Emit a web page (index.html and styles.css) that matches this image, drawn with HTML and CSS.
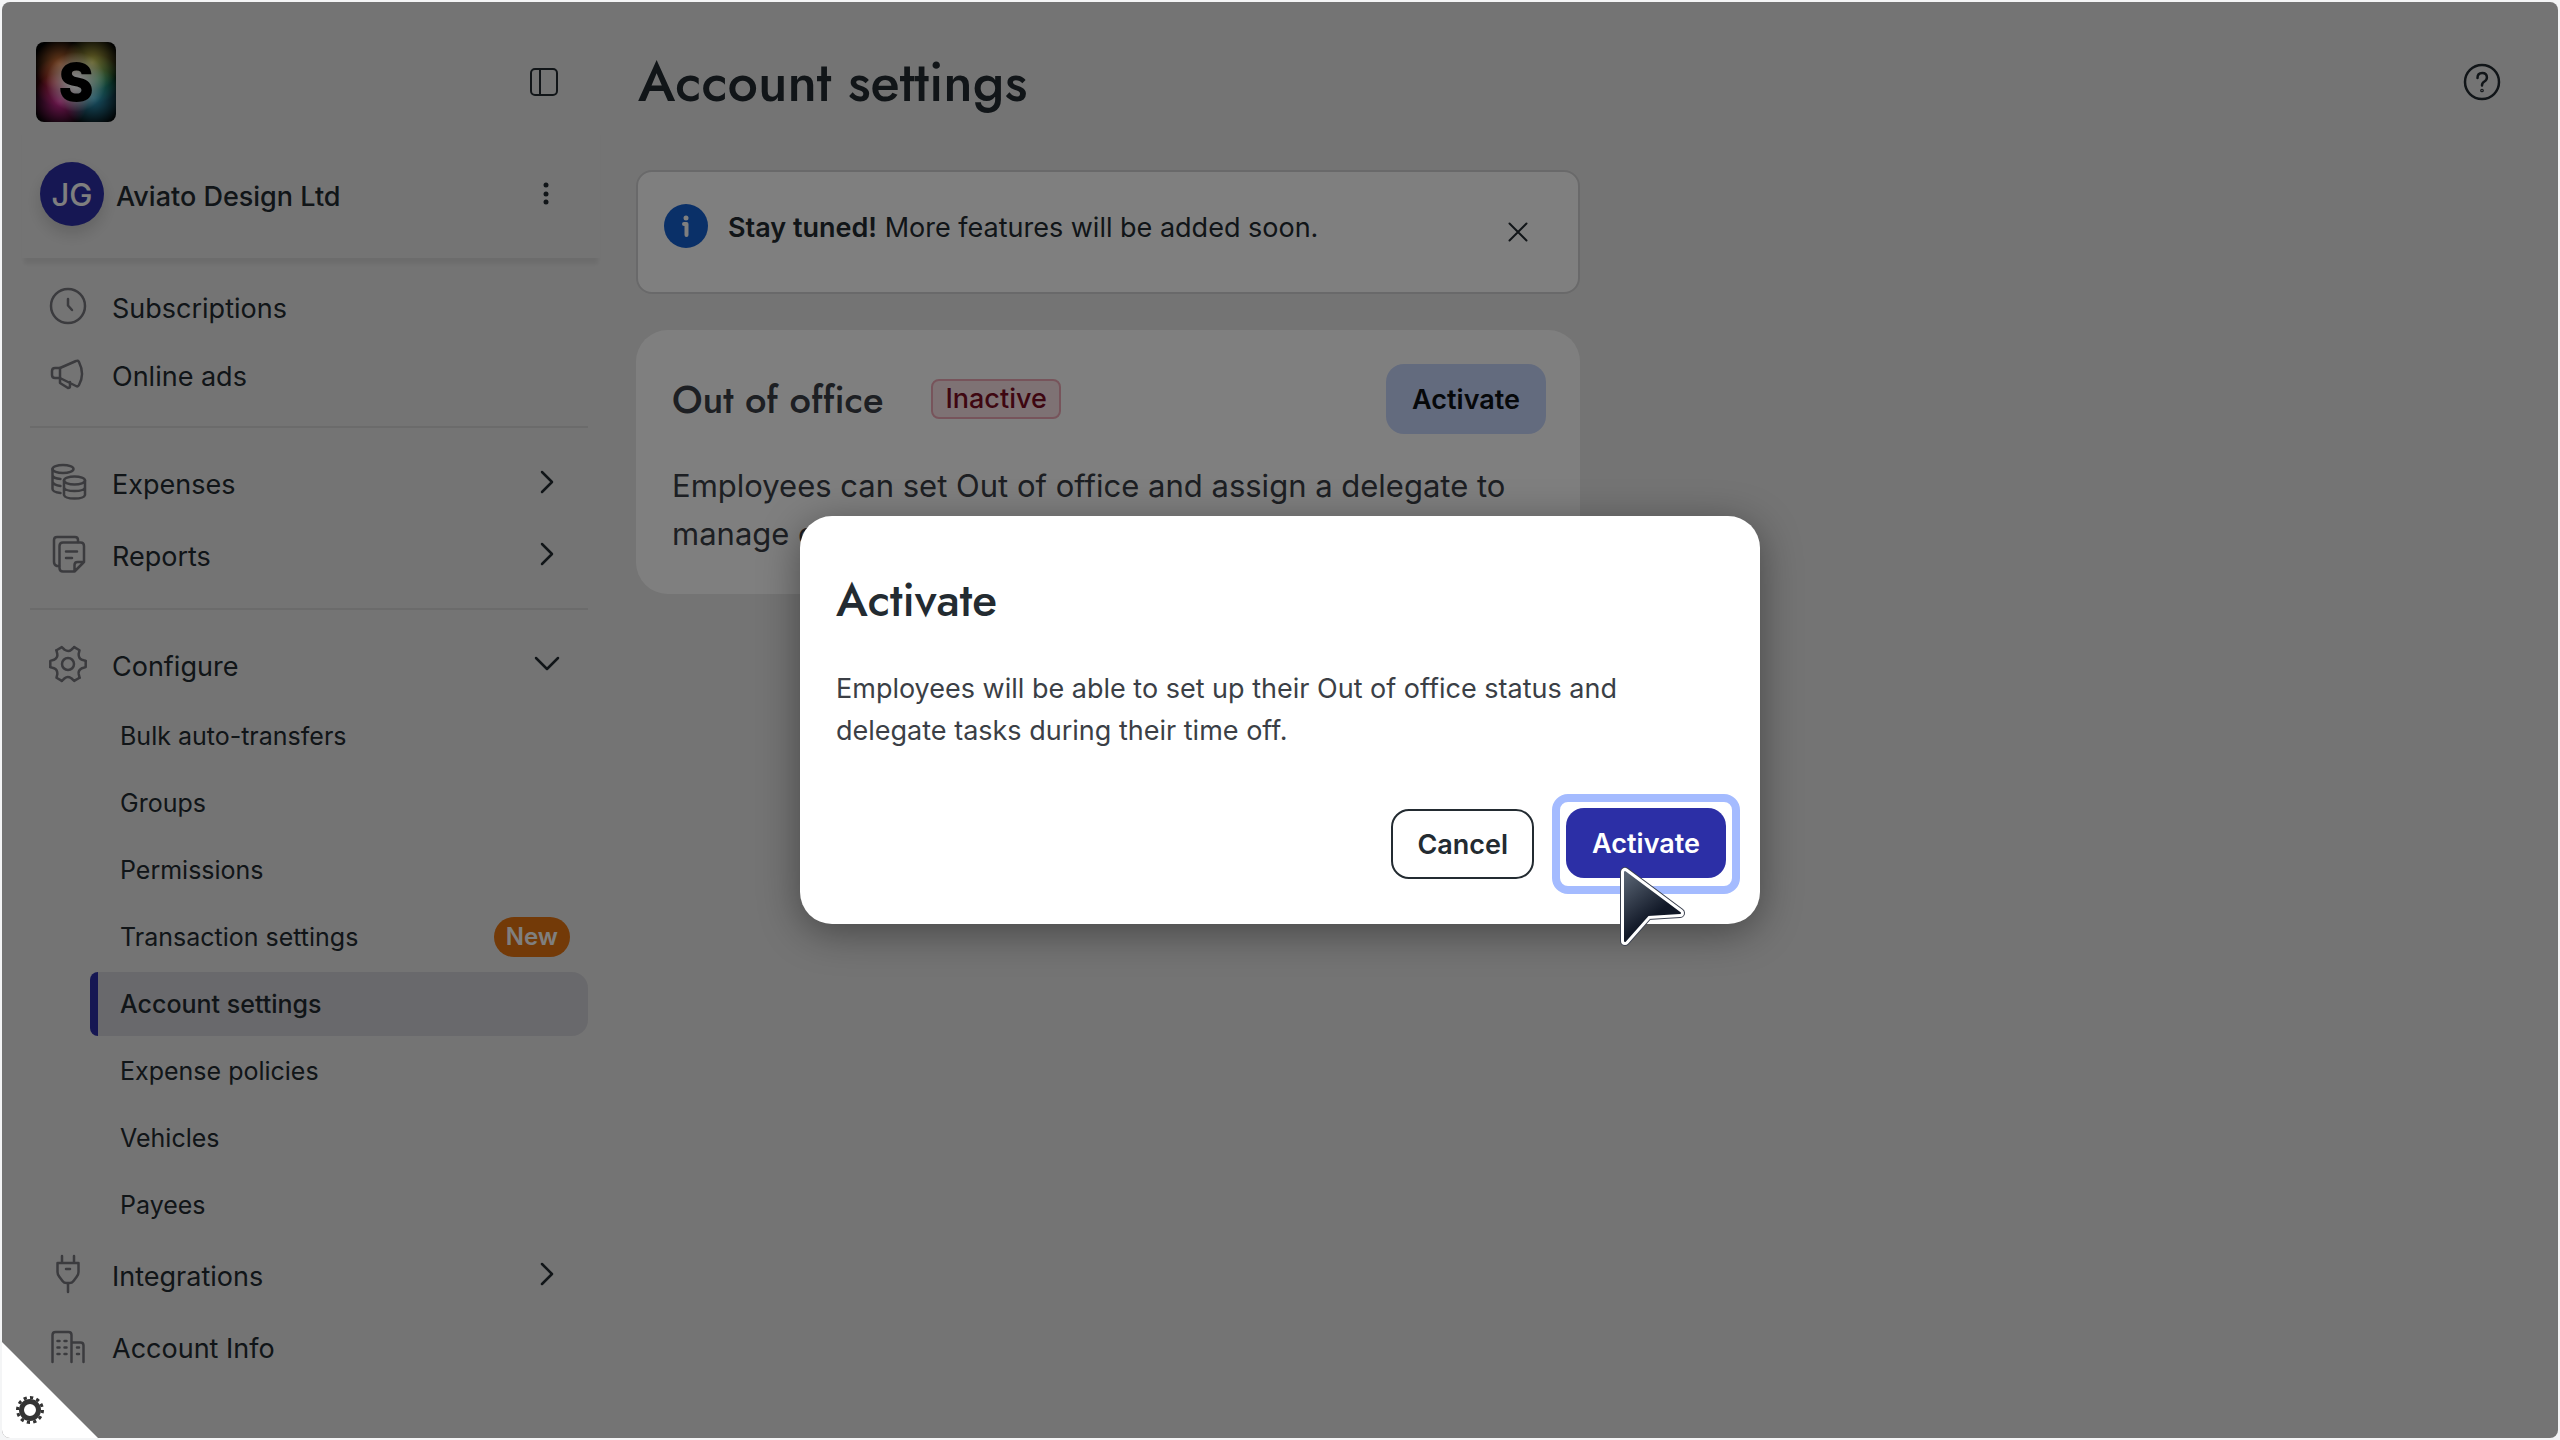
FILE: index.html
```html
<!DOCTYPE html>
<html lang="en">
<head>
    <meta charset="utf-8">
    <title>Account settings</title>
    <link rel="stylesheet" href="styles.css">
</head>
<body>
    <div class="app">
        <!-- Sidebar -->
        <aside class="sidebar">
            <div class="sidebar-top">
                <a href="#" class="logo">S</a>
                <button type="button" class="icon-btn" aria-label="Collapse sidebar">
                    <svg width="28" height="28" viewBox="0 0 28 28"><rect x="1" y="1" width="26" height="26" rx="4"/><path d="M10 1v26"/></svg>
                </button>
            </div>

            <div class="account">
                <span class="avatar">JG</span>
                <span class="account-name">Aviato Design Ltd</span>
                <button type="button" class="icon-btn dots" aria-label="Account menu">
                    <svg width="28" height="28" viewBox="0 0 28 28"><circle cx="14" cy="5" r="2.5"/><circle cx="14" cy="14" r="2.5"/><circle cx="14" cy="22" r="2.5"/></svg>
                </button>
            </div>

            <nav class="nav">
                <a href="#" class="nav-item short">
                    <svg class="nav-icon" viewBox="0 0 40 40"><circle cx="20" cy="20" r="17"/><path d="M20 13v6.500l4 4.500"/></svg>
                    <span class="nav-label">Subscriptions</span>
                </a>
                <a href="#" class="nav-item short">
                    <svg class="nav-icon" viewBox="0 0 40 40"><path d="M12 14H7q-3 0-3 3v4q0 3 3 3h5z"/><path d="M12 14L28 7q2-1 3 1q6 12 0 23q-1 2-3 1L12 24v5l8 5q2 0 2-2v-4"/></svg>
                    <span class="nav-label">Online ads</span>
                </a>
                <hr>
                <a href="#" class="nav-item">
                    <svg class="nav-icon" viewBox="0 0 40 40"><ellipse cx="15" cy="7" rx="10.500" ry="4"/><path d="M4.500 7v20q0 3 8 4M4.500 13.500q1 3 8 3.500M4.500 20q1 3 8 4"/><ellipse cx="26.500" cy="18.500" rx="10.500" ry="4"/><path d="M16 18.500V33q1 3.500 10.500 3.500T37 33V18.500M16 25.500q1 3.500 10.500 3.500T37 25.500"/></svg>
                    <span class="nav-label">Expenses</span>
                    <svg class="chevron" viewBox="0 0 28 28"><path d="M9 4l10 10L9 24"/></svg>
                </a>
                <a href="#" class="nav-item">
                    <svg class="nav-icon" viewBox="0 0 40 40"><path d="M11 32H9q-3-1-3-4V6q0-3 3-3h18q3 0 3 3v2"/><path d="M26.500 37.500H15q-3.500 0-3.500-3.500V12q0-3.500 3.500-3.500h17.500q3.500 0 3.500 3.500v16zM26.500 37.500V31q0-3 3-3H36M18 17.500h11M18 24h6"/></svg>
                    <span class="nav-label">Reports</span>
                    <svg class="chevron" viewBox="0 0 28 28"><path d="M9 4l10 10L9 24"/></svg>
                </a>
                <hr>
                <a href="#" class="nav-item">
                    <svg class="nav-icon" viewBox="0 0 40 40">
                        <g id="tooth"><path d="M37.700 16.900v6.200l-3.700 1.100q-4 2.200-3.300 5.800l.9 3.800"/></g>
                        <use href="#tooth" transform="rotate(60 20 20)"/>
                        <use href="#tooth" transform="rotate(120 20 20)"/>
                        <use href="#tooth" transform="rotate(180 20 20)"/>
                        <use href="#tooth" transform="rotate(240 20 20)"/>
                        <use href="#tooth" transform="rotate(300 20 20)"/>
                        <circle cx="20" cy="20" r="6"/>
                    </svg>
                    <span class="nav-label">Configure</span>
                    <svg class="chevron" viewBox="0 0 28 28"><path d="M3 8l11 11L25 8"/></svg>
                </a>
                <div class="subnav">
                    <a href="#">Bulk auto-transfers</a>
                    <a href="#">Groups</a>
                    <a href="#">Permissions</a>
                    <a href="#">Transaction settings <span class="new">New</span></a>
                    <a href="#" class="active">Account settings</a>
                    <a href="#">Expense policies</a>
                    <a href="#">Vehicles</a>
                    <a href="#">Payees</a>
                </div>
                <a href="#" class="nav-item">
                    <svg class="nav-icon" viewBox="0 0 40 40"><path d="M14 2v7M26 2v7M9.500 9h21v9q0 3-2 5l-3 4q-1.500 2-4 2h-3q-2.500 0-4-2l-3-4q-2-2-2-5zM20 29v9M18 15h4"/></svg>
                    <span class="nav-label">Integrations</span>
                    <svg class="chevron" viewBox="0 0 28 28"><path d="M9 4l10 10L9 24"/></svg>
                </a>
                <a href="#" class="nav-item">
                    <svg class="nav-icon" viewBox="0 0 40 40"><path d="M4.500 36V9q0-3 3-3h13q3 0 3 3v27M23.500 16.500h9q3 0 3 3V36M9.500 15h2M16.500 15h2M9.500 21.500h2M16.500 21.500h2M9.500 28h2M16.500 28h2M29 21.500h2M29 28h2"/></svg>
                    <span class="nav-label">Account Info</span>
                </a>
            </nav>
        </aside>

        <!-- Page content -->
        <main class="main">
            <header class="page-header">
                <h1>Account settings</h1>
                <button type="button" class="icon-btn help" aria-label="Help">
                    <svg width="40" height="40" viewBox="0 0 40 40"><circle cx="20" cy="20" r="17"/><path d="M15.500 16q0-5 4.700-5t4.700 4.500q0 2.500-2.500 4t-2.400 4"/><circle cx="20" cy="28.500" r=".6"/></svg>
                </button>
            </header>

            <div class="content">
                <div class="alert">
                    <svg class="info" viewBox="0 0 44 44"><circle cx="22" cy="22" r="22"/><circle class="mark-dot" cx="22" cy="14" r="2.500"/><path class="mark" d="M20 20h2.500v11"/></svg>
                    <p><strong>Stay tuned!</strong> More features will be added soon.</p>
                    <button type="button" class="icon-btn" aria-label="Dismiss">
                        <svg width="28" height="28" viewBox="0 0 28 28"><path d="M5.500 5.500l17 17M22.500 5.500l-17 17"/></svg>
                    </button>
                </div>

                <section class="card">
                    <div class="card-head">
                        <h2>Out of office</h2>
                        <span class="status">Inactive</span>
                        <button type="button" class="btn btn-light">Activate</button>
                    </div>
                    <p>Employees can set Out of office and assign a delegate to manage expenses.</p>
                </section>
            </div>
        </main>

        <!-- Confirm dialog -->
        <div class="overlay">
            <div class="modal" role="dialog" aria-modal="true" aria-labelledby="modalTitle">
                <h2 id="modalTitle">Activate</h2>
                <p>Employees will be able to set up their Out of office status and delegate tasks during their time off.</p>
                <div class="modal-actions">
                    <button type="button" class="btn btn-outline">Cancel</button>
                    <span class="focus-ring"><button type="button" class="btn btn-primary">Activate</button></span>
                </div>
                <svg class="cursor" width="72" height="88" viewBox="0 0 72 88">
                    <defs>
                        <linearGradient id="cursorFill" x1="0" y1="0" x2=".6" y2="1">
                            <stop offset="0" stop-color="#5b6675"/>
                            <stop offset=".7" stop-color="#111827"/>
                        </linearGradient>
                    </defs>
                    <path class="cursor-edge" d="M7 8v69L30 51l32-2z"/>
                    <path class="cursor-line" d="M7 8v69L30 51l32-2z"/>
                    <path class="cursor-body" d="M7 8v69L30 51l32-2z"/>
                </svg>
            </div>
        </div>

        <!-- Cookie settings corner -->
        <button type="button" class="corner" aria-label="Cookie settings">
            <svg width="28" height="28" viewBox="0 0 28 28"><circle cx="14" cy="14" r="8.500"/><circle class="cogs" cx="14" cy="14" r="12.500" pathLength="24"/></svg>
        </button>
    </div>
</body>
</html>
```
FILE: styles.css
```css
* {
    box-sizing: border-box;
}

body {
    margin: 0;
    padding: 2px;
    background: #f4f5f6;
    color: #232b31;
    font-family: Inter, "Liberation Sans", sans-serif;
    font-size: 27px;
}

h1, h2, p {
    margin: 0;
}

h1, h2 {
    font-family: Jost, Lato, sans-serif;
    font-weight: 500;
}

a {
    color: inherit;
    text-decoration: none;
}

button {
    font: inherit;
    color: inherit;
    cursor: pointer;
}

svg {
    display: block;
    flex: none;
    fill: none;
    stroke: currentColor;
    stroke-width: 2;
    stroke-linecap: round;
    stroke-linejoin: round;
}

.app {
    position: relative;
    display: flex;
    min-height: calc(100vh - 4px);
    background: #e9e9e9;
    border-radius: 8px;
    overflow: hidden;
}

.icon-btn {
    display: flex;
    border: 0;
    padding: 0;
    background: none;
}

/* Sidebar */
.sidebar {
    width: 598px;
    flex: none;
    padding: 40px 0 0 20px;
}

.sidebar-top {
    display: flex;
    align-items: center;
    justify-content: space-between;
    padding: 0 42px 0 14px;
}

.logo {
    display: flex;
    align-items: center;
    justify-content: center;
    width: 80px;
    height: 80px;
    border-radius: 8px;
    color: #000;
    font-size: 52px;
    font-weight: 900;
    background:
        radial-gradient(circle 30px at 50% 50%, #fff 20%, transparent),
        radial-gradient(circle 26px at 30% 28%, #e8803c, transparent),
        radial-gradient(circle 28px at 70% 26%, #d8cc50, transparent),
        radial-gradient(circle 24px at 26% 50%, #d01e28, transparent),
        radial-gradient(circle 24px at 76% 46%, #14a050, transparent),
        radial-gradient(circle 28px at 30% 74%, #e02ea0, transparent),
        radial-gradient(circle 30px at 72% 70%, #34a8d0, transparent),
        #000;
    background-blend-mode: screen;
}

.account {
    display: flex;
    align-items: center;
    padding: 40px 40px 32px 18px;
    box-shadow: 0 8px 4px -2px rgba(0, 0, 0, 0.07);
}

.avatar {
    display: flex;
    align-items: center;
    justify-content: center;
    width: 64px;
    height: 64px;
    border-radius: 50%;
    background: #2c2fa6;
    color: #fff;
    font-size: 31px;
    font-weight: 500;
    box-shadow: 0 8px 16px rgba(0, 0, 0, 0.15);
}

.account-name {
    flex: 1;
    padding: 4px 0 0 12px;
    font-weight: 500;
}

.dots svg {
    fill: currentColor;
    stroke: none;
}

.nav {
    padding: 14px 12px 0 8px;
}

.nav hr {
    margin: 18px 0;
    border: 0;
    border-top: 2px solid #d6d6d7;
}

.nav-item {
    display: flex;
    align-items: center;
    height: 72px;
    padding: 0 27px 0 18px;
}

.nav-item.short {
    height: 68px;
}

.nav-icon {
    width: 40px;
    height: 40px;
    color: #76767d;
    stroke-width: 2.5;
}

.nav-label {
    flex: 1;
    padding: 4px 0 0 24px;
}

.chevron {
    width: 28px;
    height: 28px;
    stroke-width: 2.5;
}

.subnav {
    display: flex;
    flex-direction: column;
    gap: 3px;
    padding: 4px 0 1px 60px;
    font-size: 25px;
}

.subnav a {
    display: flex;
    align-items: center;
    justify-content: space-between;
    height: 64px;
    padding: 0 18px 0 22px;
    border-left: 8px solid transparent;
    border-radius: 8px 16px 16px 8px;
}

.subnav .active {
    border-left-color: #2c2fa6;
    background: #d3d3d8;
    font-weight: 500;
}

.new {
    padding: 0 12px;
    border-radius: 20px;
    background: #e67410;
    color: #fff;
    font-size: 24px;
    font-weight: 600;
    line-height: 40px;
}

/* Content */
.main {
    flex: 1;
    padding: 0 56px 0 36px;
}

.page-header {
    display: flex;
    align-items: center;
    justify-content: space-between;
    height: 160px;
    margin-bottom: 8px;
}

.page-header h1 {
    padding-left: 2px;
    font-size: 54px;
}

.help svg {
    stroke-width: 2.5;
}

.content {
    max-width: 944px;
}

.alert {
    display: flex;
    align-items: flex-start;
    gap: 20px;
    height: 124px;
    margin-bottom: 36px;
    padding: 32px 46px 32px 26px;
    border: 2px solid #d3d3d4;
    border-radius: 16px;
    background: #fff;
}

.alert p {
    flex: 1;
    line-height: 48px;
}

.alert strong {
    font-weight: 600;
}

.alert .icon-btn {
    padding-top: 14px;
}

.info {
    width: 44px;
    height: 44px;
    fill: #1560d0;
    stroke: none;
}

.mark-dot {
    fill: #fff;
}

.mark {
    fill: none;
    stroke: #fff;
    stroke-width: 4;
}

.card {
    padding: 34px 34px 36px 36px;
    border-radius: 32px;
    background: #fff;
    color: #3b3f46;
}

.card-head {
    display: flex;
    align-items: center;
    height: 70px;
    margin-bottom: 28px;
}

.card-head h2 {
    margin-right: 48px;
    font-size: 38px;
}

.card-head .btn {
    margin-left: auto;
}

.card p {
    font-size: 31px;
    line-height: 48px;
}

.status {
    padding: 0 12px;
    border: 2px solid #efa9b6;
    border-radius: 8px;
    background: #fde4e9;
    color: #7c0c22;
    font-weight: 500;
    line-height: 36px;
}

.btn {
    height: 70px;
    padding: 0 26px;
    border: 0;
    border-radius: 18px;
    font-weight: 600;
}

.btn-light {
    background: #c6d6fc;
    color: #0c1014;
}

.btn-outline {
    padding: 0 24px;
    border: 2px solid #232b31;
    background: #fff;
}

.btn-primary {
    background: #2c2fa6;
    color: #fff;
}

/* Dialog */
.overlay {
    position: absolute;
    inset: 0;
    display: flex;
    align-items: center;
    justify-content: center;
    background: rgba(0, 0, 0, 0.5);
}

.modal {
    position: relative;
    width: 960px;
    padding: 52px 20px 30px 36px;
    border-radius: 32px;
    background: #fff;
    box-shadow: 0 8px 40px rgba(0, 0, 0, 0.4);
}

.modal h2 {
    margin-bottom: 36px;
    font-size: 46px;
    line-height: 64px;
}

.modal p {
    max-width: 800px;
    color: #3b3f46;
    line-height: 42px;
}

.modal-actions {
    display: flex;
    align-items: center;
    justify-content: flex-end;
    gap: 18px;
    margin-top: 42px;
}

.focus-ring {
    padding: 6px 6px 8px;
    border: 8px solid #a4bbff;
    border-radius: 16px;
}

.focus-ring .btn {
    display: block;
}

.cursor {
    position: absolute;
    right: 70px;
    bottom: -28px;
}

.cursor-edge {
    stroke: #3b4150;
    stroke-width: 10;
}

.cursor-line {
    stroke: #fff;
    stroke-width: 8;
}

.cursor-body {
    fill: url(#cursorFill);
    stroke: url(#cursorFill);
    stroke-width: 2;
}

/* Corner tab */
.corner {
    position: absolute;
    left: 0;
    bottom: 0;
    display: flex;
    align-items: flex-end;
    width: 96px;
    height: 96px;
    padding: 0 0 14px 14px;
    border: 0;
    background: #fff;
    color: #333;
    clip-path: polygon(0 0, 100% 100%, 0 100%);
}

.corner svg {
    stroke-width: 5;
}

.corner .cogs {
    stroke-width: 3;
    stroke-linecap: butt;
    stroke-dasharray: 1 1;
}
```
